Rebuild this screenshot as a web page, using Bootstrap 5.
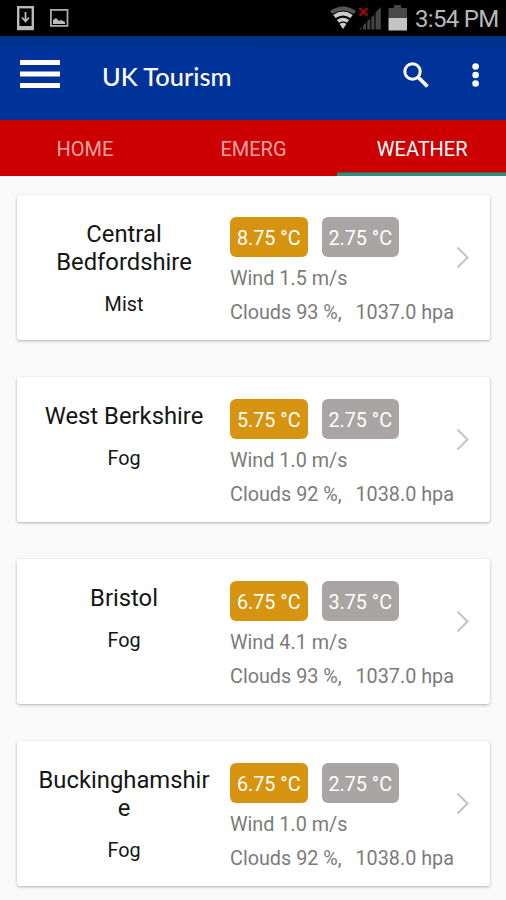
<!DOCTYPE html>
<html lang="en">
<head>
<meta charset="utf-8">
<meta name="viewport" content="width=device-width, initial-scale=1">
<title>UK Tourism</title>
<link href="https://cdn.jsdelivr.net/npm/bootstrap@5.3.0/dist/css/bootstrap.min.css" rel="stylesheet">
<style>
body{font-family:Roboto,"Liberation Sans",sans-serif;background:#fafafa;height:900px;overflow:hidden}
svg{display:block;flex:none}
.statusbar{height:36px;background:#000;padding:0 8px 0 16px}
.clock{font-size:24px;line-height:36px;color:#b8b8b8;width:83px;white-space:nowrap;letter-spacing:-.7px;padding-top:1px}
.appbar{height:84px;background:linear-gradient(#002f86,#003399 14px);padding:0 20px 8px 20px}
.apptitle{font-family:Lato,sans-serif;font-size:25.4px;font-weight:500;line-height:36px;margin-left:42px;padding-top:3px}
.appicon{margin-top:2px}
.tabs{height:56px;background:#c00;grid-template-columns:repeat(3,1fr)}
.tabs .nav-link{border-radius:0;padding:2px 0 0 1px;height:56px;line-height:54px;font-size:20px;color:#f0a3a3}
.tabs .nav-link.active{color:#fff;box-shadow:inset 0 -3.5px #26917f}
.feed{padding:19px 16px 0 17px;gap:37.5px}
.place{height:144.5px;border:0;border-radius:3px;box-shadow:0 1px 3px rgba(0,0,0,.3);flex:none}
.place-main{width:178px;margin-left:18px;padding-top:24.5px;color:#151515}
.place-name{font-size:23.8px;line-height:28px;word-break:break-word}
.place-sky{font-size:19.8px;line-height:28px;margin-top:15.5px}
.readings{margin-left:17px;padding-top:21.5px;width:226px;font-size:19.8px;line-height:34px;color:#7b7b7b}
.temp{width:77.5px;height:40px;line-height:43px;border-radius:6px;color:#fff;text-align:center;white-space:nowrap}
.temps{gap:14px;margin-bottom:5px}
.temp-now{background:#d69410}
.temp-low{background:#a9a5a4}
.readings p{white-space:pre}
.chevron{margin-top:50.5px}
</style>
</head>
<body>
<header>
  <div class="statusbar d-flex align-items-center">
    <svg width="54" height="36" viewBox="0 0 54 36"><rect x="2.2" y="7.2" width="14.6" height="21.8" fill="none" stroke="#b9b9b9" stroke-width="2.4"/><path d="M1 26h17v4H1z" fill="#b9b9b9"/><path d="M9.5 12v8.5M6 17.5l3.5 4 3.5-4" fill="none" stroke="#b9b9b9" stroke-width="1.8"/><rect x="34.9" y="9.9" width="16.6" height="16" fill="none" stroke="#aaa" stroke-width="1.8"/><path d="M37 24v-4l3-2 3 3 2-1 4 2v2z" fill="#bbb"/></svg>
    <svg class="ms-auto me-2" width="78" height="36" viewBox="-1 0 78 36"><path d="M0 11Q13 2 26 11L23.7 14Q13 7 2.4 14z" fill="#555"/><path d="M3.2 15Q13 8.2 22.8 15l-2.4 3Q13 13 5.6 18zM6.8 20Q13 15.5 19.2 20l-2.3 2.8Q13 20 9.1 22.8zM9.6 24Q13 21.5 16.4 24L13 29z" fill="#ccc"/><path d="M29 29.5h2.8V27zm4 0h3v-7l-3 3zm4.2 0h3V18.6l-3 3zm4.2 0h3V14.4l-3 3zm4.2 0h5.2V7l-5.2 5.3z" fill="#454545"/><path d="M29.5 8l8 7.5m0-7.5l-8 7.5" stroke="#b40000" stroke-width="2"/><path d="M58.5 8H64V5h7v3h6v10H58.5z" fill="#484848"/><path d="M58.5 18H77v12.5H58.5z" fill="#c4c4c4"/></svg>
    <div class="clock">3:54 PM</div>
  </div>
  <div class="appbar d-flex align-items-center text-white">
    <svg width="40" height="30" viewBox="0 0 40 30"><path d="M0 3.5h40M0 15h40M0 26.5h40" stroke="#fff" stroke-width="5"/></svg>
    <h1 class="apptitle mb-0">UK Tourism</h1>
    <svg class="appicon ms-auto" width="26" height="26" viewBox="0 0 26 26"><circle cx="9.5" cy="9.5" r="7.7" fill="none" stroke="#fff" stroke-width="3"/><path d="M15.5 15.5l9 9" stroke="#fff" stroke-width="3.8"/></svg>
    <svg class="appicon" width="57" height="26" viewBox="0 0 57 26"><g fill="#fff"><circle cx="46.6" cy="4.5" r="3.3"/><circle cx="46.6" cy="13" r="3.3"/><circle cx="46.6" cy="21.5" r="3.3"/></g></svg>
  </div>
  <nav class="tabs nav d-grid">
    <a class="nav-link text-center">HOME</a>
    <a class="nav-link text-center">EMERG</a>
    <a class="nav-link text-center active">WEATHER</a>
  </nav>
</header>
<main class="feed d-flex flex-column">
  <article class="card place flex-row">
    <div class="place-main text-center"><div class="place-name">Central Bedfordshire</div><div class="place-sky">Mist</div></div>
    <div class="readings"><div class="temps d-flex"><span class="temp temp-now">8.75 °C</span><span class="temp temp-low">2.75 °C</span></div><p class="mb-0">Wind 1.5 m/s</p><p class="mb-0">Clouds 93 %,  <span class="ms-1">1037.0 hpa</span></p></div>
    <svg class="chevron" width="14" height="24" viewBox="0 0 14 24"><path d="M1.5 1.5l10 10-10 10" fill="none" stroke="#c4c4c4" stroke-width="2"/></svg>
  </article>
  <article class="card place flex-row">
    <div class="place-main text-center"><div class="place-name">West Berkshire</div><div class="place-sky">Fog</div></div>
    <div class="readings"><div class="temps d-flex"><span class="temp temp-now">5.75 °C</span><span class="temp temp-low">2.75 °C</span></div><p class="mb-0">Wind 1.0 m/s</p><p class="mb-0">Clouds 92 %,  <span class="ms-1">1038.0 hpa</span></p></div>
    <svg class="chevron" width="14" height="24" viewBox="0 0 14 24"><path d="M1.5 1.5l10 10-10 10" fill="none" stroke="#c4c4c4" stroke-width="2"/></svg>
  </article>
  <article class="card place flex-row">
    <div class="place-main text-center"><div class="place-name">Bristol</div><div class="place-sky">Fog</div></div>
    <div class="readings"><div class="temps d-flex"><span class="temp temp-now">6.75 °C</span><span class="temp temp-low">3.75 °C</span></div><p class="mb-0">Wind 4.1 m/s</p><p class="mb-0">Clouds 93 %,  <span class="ms-1">1037.0 hpa</span></p></div>
    <svg class="chevron" width="14" height="24" viewBox="0 0 14 24"><path d="M1.5 1.5l10 10-10 10" fill="none" stroke="#c4c4c4" stroke-width="2"/></svg>
  </article>
  <article class="card place flex-row">
    <div class="place-main text-center"><div class="place-name">Buckinghamshire</div><div class="place-sky">Fog</div></div>
    <div class="readings"><div class="temps d-flex"><span class="temp temp-now">6.75 °C</span><span class="temp temp-low">2.75 °C</span></div><p class="mb-0">Wind 1.0 m/s</p><p class="mb-0">Clouds 92 %,  <span class="ms-1">1038.0 hpa</span></p></div>
    <svg class="chevron" width="14" height="24" viewBox="0 0 14 24"><path d="M1.5 1.5l10 10-10 10" fill="none" stroke="#c4c4c4" stroke-width="2"/></svg>
  </article>
</main>
<script src="https://cdn.jsdelivr.net/npm/bootstrap@5.3.0/dist/js/bootstrap.bundle.min.js"></script>
</body>
</html>
